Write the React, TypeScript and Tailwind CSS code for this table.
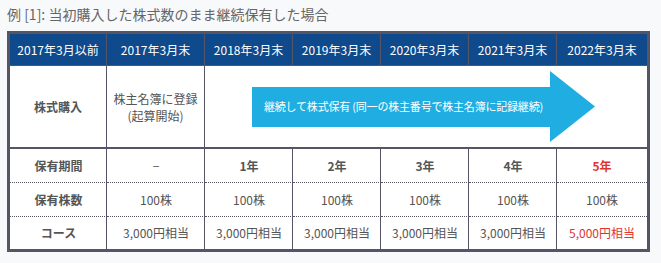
// 継続保有の例 — 株主優待コース表
const FONT = "font-['Noto_Sans_CJK_JP','Noto_Sans',sans-serif]";

const YEARS = [
  "2017年3月以前",
  "2017年3月末",
  "2018年3月末",
  "2019年3月末",
  "2020年3月末",
  "2021年3月末",
  "2022年3月末",
];

const ROWS: { label: string; cells: string[]; bold?: boolean; last?: boolean }[] = [
  { label: "保有期間", cells: ["−", "1年", "2年", "3年", "4年", "5年"], bold: true },
  { label: "保有株数", cells: ["100株", "100株", "100株", "100株", "100株", "100株"] },
  {
    label: "コース",
    cells: ["3,000円相当", "3,000円相当", "3,000円相当", "3,000円相当", "3,000円相当", "5,000円相当"],
    last: true,
  },
];

// 右の縦線は shadow、下の点線は border-dotted
const VLINE = "shadow-[inset_-1px_0_0_#555566]";
const DOTTED = "border-b border-dotted border-[#555566]";

export default function App() {
  return (
    <div className={`min-h-[263px] w-[661px] bg-[#f8f9fb] pl-[7px] ${FONT}`}>
      <p className="h-[31px] pt-[3px] text-[14px] leading-[22px] text-[#666]">
        例 [1]: 当初購入した株式数のまま継続保有した場合
      </p>

      <div className="w-[643px] border-[3px] border-[#555566] bg-white">
        <table className="w-full table-fixed border-separate border-spacing-0 text-[12px] text-[#555]">
          <colgroup>
            <col className="w-[97px]" />
            <col className="w-[98px]" />
            <col className="w-[88px]" />
            <col className="w-[88px]" />
            <col className="w-[88px]" />
            <col className="w-[88px]" />
            <col />
          </colgroup>
          <thead>
            <tr className="h-[32px] bg-[#0e4a8c] text-white">
              {YEARS.map((y, i) => (
                <th
                  key={y}
                  className={`border-b border-[#555566] font-normal ${i < 6 ? "border-r" : ""}`}
                >
                  {y}
                </th>
              ))}
            </tr>
          </thead>
          <tbody>
            <tr className="h-[83px]">
              <td className="border-r border-b-2 border-[#555566] text-center font-bold">株式購入</td>
              <td className="border-r border-b-2 border-[#555566] text-center leading-[17px]">
                株主名簿に登録
                <br />
                (起算開始)
              </td>
              <td colSpan={5} className="border-b-2 border-[#555566] pl-[47px]">
                {/* 継続の矢印 */}
                <div className="flex items-center">
                  <div className="flex h-[40px] w-[299px] items-center bg-[#1fade2] pl-[12px] text-white">
                    <span className="relative z-10 whitespace-nowrap text-[11px] tracking-[-0.2px]">
                      継続して株式保有 (同一の株主番号で株主名簿に記録継続)
                    </span>
                  </div>
                  <svg width="45" height="71" viewBox="0 0 45 71" className="-ml-px">
                    <polygon points="0,0 45,35.5 0,71" fill="#1fade2" />
                  </svg>
                </div>
              </td>
            </tr>
            {ROWS.map((r) => (
              <tr key={r.label} className={r.last ? "h-[32px]" : "h-[34px]"}>
                <td className={`${VLINE} text-center font-bold ${r.last ? "" : DOTTED}`}>
                  {r.label}
                </td>
                {r.cells.map((c, i) => {
                  const hi = i === 5 && r.label !== "保有株数";
                  return (
                    <td
                      key={i}
                      className={`text-center ${i < 5 ? VLINE : ""} ${r.last ? "" : DOTTED} ${
                        r.bold && c !== "−" ? "font-bold" : ""
                      } ${hi ? "text-[#e0342c]" : ""}`}
                    >
                      {c}
                    </td>
                  );
                })}
              </tr>
            ))}
          </tbody>
        </table>
      </div>
    </div>
  );
}
